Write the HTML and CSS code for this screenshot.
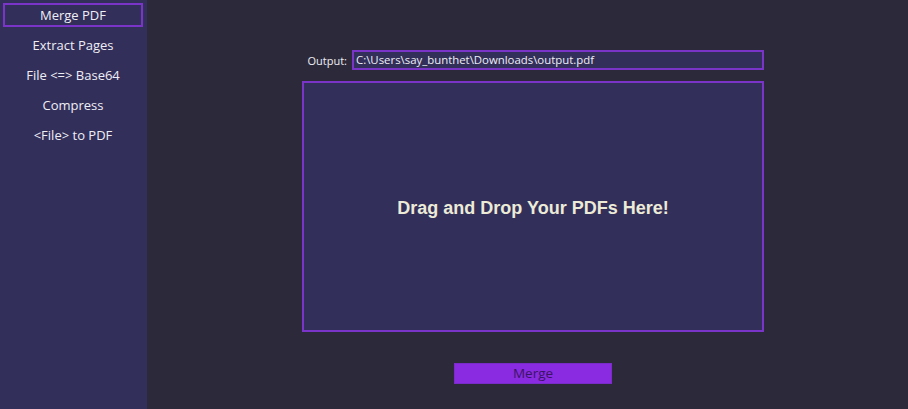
FILE: index.html
```html
<!DOCTYPE html>
<html>
<head>
<meta charset="utf-8">
<link rel="stylesheet" href="styles.css">
</head>
<body>
<div class="app">
  <nav class="sidebar">
    <div class="nav-item active">Merge PDF</div>
    <div class="nav-item">Extract Pages</div>
    <div class="nav-item">File &lt;=&gt; Base64</div>
    <div class="nav-item">Compress</div>
    <div class="nav-item">&lt;File&gt; to PDF</div>
  </nav>
  <main class="main">
    <div class="output-row">
      <span class="output-label">Output:</span>
      <div class="output-input">C:\Users\say_bunthet\Downloads\output.pdf</div>
    </div>
    <div class="dropzone">Drag and Drop Your PDFs Here!</div>
    <div class="btn-row">
      <div class="merge-btn">Merge</div>
    </div>
  </main>
</div>
</body>
</html>
```

FILE: styles.css
```css
html, body {
  margin: 0;
  padding: 0;
  height: 100%;
  background: #2c2a3a;
  font-family: "Open Sans", "Noto Sans", sans-serif;
}
.app {
  display: flex;
  height: 409px;
  width: 908px;
}
.sidebar {
  width: 147px;
  flex: none;
  background: #332f5b;
  padding: 3px 4px 0 3px;
  box-sizing: border-box;
  display: flex;
  flex-direction: column;
  gap: 6px;
}
.nav-item {
  height: 24px;
  line-height: 25px;
  text-align: center;
  color: #eeeef4;
  font-size: 13px;
  font-weight: 500;
  box-sizing: border-box;
}
.nav-item.active {
  border: 2px solid #7a35c8;
  line-height: 21px;
}
.main {
  flex: 1;
  padding: 50px 0 0 155px;
  box-sizing: border-box;
  display: flex;
  flex-direction: column;
}
.output-row {
  display: flex;
  align-items: center;
  width: 462px;
  height: 20px;
}
.output-label {
  width: 50px;
  text-align: right;
  padding-right: 5px;
  box-sizing: border-box;
  color: #eeeef4;
  font-size: 11px;
  font-weight: 500;
}
.output-input {
  flex: 1;
  height: 20px;
  box-sizing: border-box;
  border: 2px solid #7a35c8;
  background: #332f5b;
  color: #eeeef4;
  font-size: 11.4px;
  line-height: 16px;
  padding-left: 2px;
  white-space: nowrap;
}
.dropzone {
  margin-top: 11px;
  width: 462px;
  height: 251px;
  box-sizing: border-box;
  border: 2px solid #7a35c8;
  background: #332f5b;
  display: flex;
  align-items: center;
  justify-content: center;
  padding-top: 4px;
  color: #ecebd8;
  font-family: "Liberation Sans", Arial, sans-serif;
  font-weight: bold;
  font-size: 18px;
}
.btn-row {
  width: 462px;
  display: flex;
  justify-content: center;
  margin-top: 31px;
}
.merge-btn {
  width: 158px;
  height: 21px;
  box-sizing: border-box;
  background: #8a2be2;
  border: 1px solid #7a2cc8;
  color: #3a1464;
  font-size: 13.5px;
  line-height: 19px;
  text-align: center;
}
```
